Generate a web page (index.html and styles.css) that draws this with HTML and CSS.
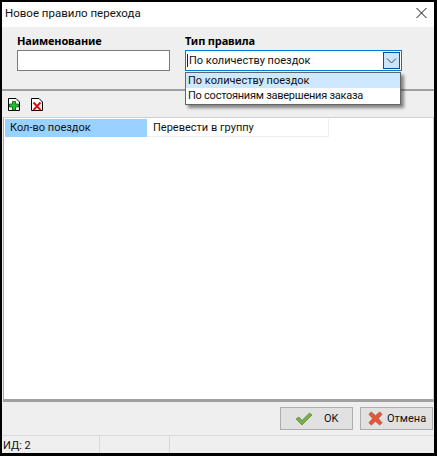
FILE: index.html
```html
<!DOCTYPE html>
<html lang="ru">
<head>
    <meta charset="UTF-8">
    <title>Новое правило перехода</title>
    <link rel="stylesheet" href="styles.css">
</head>
<body>

<div class="window">
    <div class="titlebar">
        <span class="title">Новое правило перехода</span>
        <svg class="close" width="11" height="10" viewBox="0 0 11 10"><path d="M0.5 0L10.5 10M10.5 0L0.5 10" stroke="#111" fill="none"/></svg>
    </div>

    <div class="form">
        <div class="field name-field">
            <label>Наименование</label>
            <div class="input"></div>
        </div>
        <div class="field type-field">
            <label>Тип правила</label>
            <div class="combo">
                <span class="caret"></span>
                <span>По количеству поездок</span>
                <span class="combo-btn">
                    <svg width="11" height="6" viewBox="0 0 11 6"><path d="M1 0.5L5.5 5L10 0.5" stroke="#444" fill="none"/></svg>
                </span>
            </div>
            <div class="dropdown">
                <div class="option selected">По количеству поездок</div>
                <div class="option option-long">По состояниям завершения заказа</div>
            </div>
        </div>
    </div>

    <div class="toolbar">
        <svg width="12" height="13" viewBox="0 0 12 13">
            <path d="M0.5 0.5H8L11.5 4V12.5H0.5Z" fill="#fff" stroke="#000"/>
            <path d="M4.5 3.5H7.5V6H10.5V9H7.5V12H4.5V9H1.5V6H4.5Z" fill="#1fc02a" stroke="#0b5a14" stroke-width="0.8"/>
        </svg>
        <svg width="12" height="13" viewBox="0 0 12 13">
            <path d="M0.5 0.5H8L11.5 4V12.5H0.5Z" fill="#fff" stroke="#000"/>
            <path d="M2.5 4.5L9.5 12M9.5 4.5L2.5 12" stroke="#e01010" stroke-width="2" fill="none"/>
        </svg>
    </div>

    <div class="table-area">
        <div class="row">
            <div class="cell cell-key">Кол-во поездок</div>
            <div class="cell cell-value">Перевести в группу</div>
        </div>
    </div>

    <div class="buttons">
        <div class="btn btn-ok">
            <svg width="18" height="14" viewBox="0 0 18 14"><path d="M1 7L4 5L7 8.5L14.5 1L17 3L7 13Z" fill="#7cab4a" stroke="#5f8f38" stroke-width="0.8"/></svg>
            <span>OK</span>
        </div>
        <div class="btn btn-cancel">
            <svg width="15" height="15" viewBox="0 0 16 16"><path d="M1 3.5L3.5 1L8 5L12.5 1L15 3.5L11 8L15 12.5L12.5 15L8 11L3.5 15L1 12.5L5 8Z" fill="#e0583a" stroke="#b84a30" stroke-width="0.8"/></svg>
            <span>Отмена</span>
        </div>
    </div>

    <div class="statusbar">
        <div class="status-cell status-id">ИД: 2</div>
        <div class="status-cell status-mid"></div>
        <div class="status-cell"></div>
    </div>
</div>

</body>
</html>
```

FILE: styles.css
```css
html, body {
    margin: 0;
    padding: 0;
}
body {
    box-sizing: border-box;
    width: 437px;
    height: 456px;
    padding: 2px 3px 3px 2px;
    background: #000;
    font-family: Roboto, "Noto Sans", sans-serif;
    font-size: 11px;
    color: #111;
    overflow: hidden;
}
.window {
    height: 451px;
    background: #efefef;
    display: flex;
    flex-direction: column;
}
.titlebar {
    box-sizing: border-box;
    height: 25px;
    flex: none;
    background: #fff;
    display: flex;
    align-items: center;
    justify-content: space-between;
    padding: 0 7px 3px 3px;
}
.title {
    font-size: 11.5px;
}
.form {
    height: 62px;
    flex: none;
    display: flex;
    padding-left: 15px;
    border-bottom: 2px solid #a0a0a0;
}
.field {
    position: relative;
    padding-top: 6px;
}
.name-field {
    width: 153px;
    margin-right: 15px;
}
.type-field {
    width: 217px;
}
label {
    display: block;
    height: 15px;
    font-family: "Noto Sans", sans-serif;
    font-size: 11px;
    font-weight: bold;
    letter-spacing: -0.15px;
    line-height: 15px;
    color: #000;
}
.input {
    box-sizing: border-box;
    height: 21px;
    margin-top: 2px;
    background: #fff;
    border: 1px solid #7a7a7a;
}
.combo {
    box-sizing: border-box;
    height: 21px;
    margin-top: 2px;
    display: flex;
    align-items: center;
    padding-left: 1px;
    background: #fff;
    border: 1px solid #0078d7;
    position: relative;
}
.caret {
    width: 1px;
    height: 13px;
    margin-right: 1px;
    background: #222;
}
.combo-btn {
    position: absolute;
    right: 1px;
    top: 1px;
    box-sizing: border-box;
    width: 17px;
    height: 17px;
    background: #cce4f7;
    border: 1px solid #005499;
    display: flex;
    align-items: center;
    justify-content: center;
}
.dropdown {
    position: absolute;
    left: 0;
    top: 45px;
    box-sizing: border-box;
    width: 216px;
    height: 33px;
    background: #fff;
    border: 1px solid #646464;
    box-shadow: 3px 3px 3px rgba(0, 0, 0, 0.45);
    z-index: 2;
}
.option {
    height: 15px;
    line-height: 15px;
    padding-left: 2px;
}
.option-long {
    letter-spacing: -0.25px;
}
.selected {
    background: #cde8ff;
}
.toolbar {
    height: 26px;
    flex: none;
    display: flex;
    align-items: center;
    gap: 11px;
    padding-left: 6px;
    box-sizing: border-box;
}
.table-area {
    flex: 1;
    background: #fff;
    border: 1px solid #d0d0d0;
    border-left: 1px solid #a8a8a8;
    margin-left: 1px;
    border-bottom: 3px solid #a0a0a0;
    padding: 1px;
}
.row {
    display: flex;
    height: 18px;
    line-height: 18px;
}
.cell {
    padding-left: 5px;
    box-sizing: border-box;
}
.cell-key {
    width: 142px;
    background: #99d1ff;
}
.cell-value {
    width: 182px;
    padding-left: 6px;
    border-right: 1px solid #eee;
    border-bottom: 1px solid #eee;
}
.buttons {
    height: 34px;
    flex: none;
    box-sizing: border-box;
    display: flex;
    justify-content: flex-end;
    align-items: center;
    gap: 7px;
    padding-right: 1px;
    border-bottom: 1px solid #dcdcdc;
}
.btn {
    box-sizing: border-box;
    height: 23px;
    background: #e1e1e1;
    border: 1px solid #adadad;
    display: flex;
    align-items: center;
}
.btn-ok {
    width: 73px;
    gap: 11px;
    padding-left: 14px;
}
.btn-cancel {
    width: 73px;
    gap: 4px;
    padding-left: 7px;
}
.statusbar {
    height: 17px;
    flex: none;
    display: flex;
}
.status-cell {
    line-height: 19px;
    padding-left: 1px;
    box-sizing: border-box;
}
.status-id {
    width: 98px;
    border-right: 1px solid #d8d8d8;
}
.status-mid {
    width: 70px;
    border-right: 1px solid #d8d8d8;
}
```
